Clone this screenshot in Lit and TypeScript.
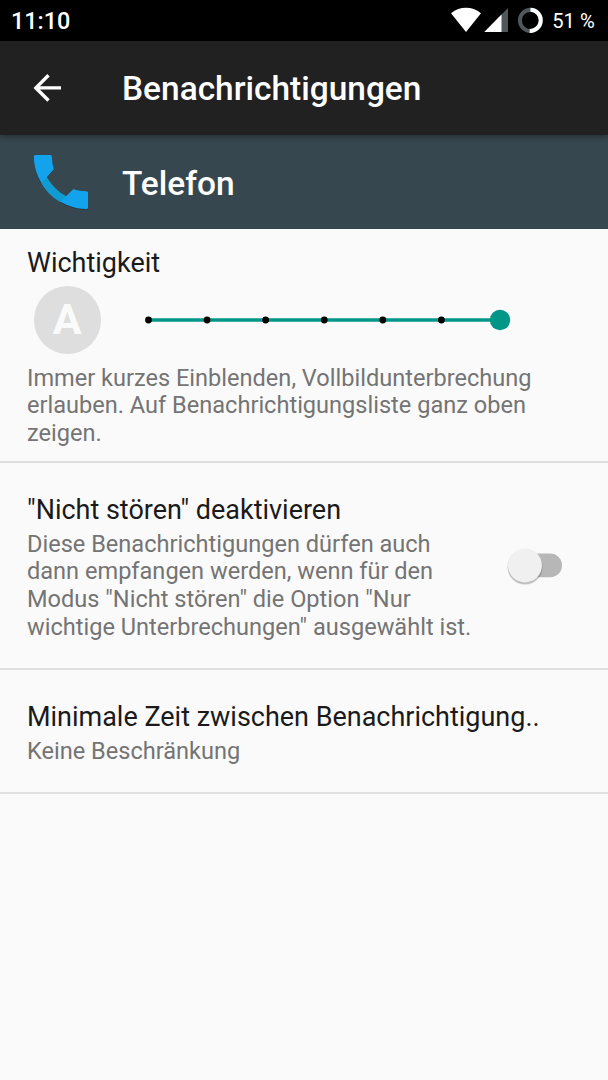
import { LitElement, html, svg, css } from "lit";
import { customElement, property } from "lit/decorators.js";

@customElement("status-bar")
class StatusBar extends LitElement {
  static styles = css`
    :host { display: flex; height: 40.5px; box-sizing: border-box; background: #000; color: #fff; padding: 0 13.3px 0 11px; }
    .clock { font-size: 23.4px; font-weight: 500; line-height: 42px; flex: 1; }
    .icons { display: block; flex: none; margin-right: 7.2px; }
    .battery { font-size: 20.2px; line-height: 42px; white-space: nowrap; }
  `;
  render() {
    return html`
      <span class="clock">11:10</span>
      <svg class="icons" width="95" height="40" viewBox="450 0 95 40">
        <path fill="#fff" d="M451 13.2C460 6 472 6 481 13.2L466 32Z" />
        <path fill="#50575a" d="M484.3 32L508 8V32Z" />
        <path fill="#fff" d="M484.3 32L501.5 14.6V32Z" />
        <circle cx="530.5" cy="20.3" r="10.6" fill="none" stroke="#50575a" stroke-width="4" />
        <path fill="none" stroke="#fff" stroke-width="4" d="M530.5 9.7A10.6 10.6 0 0 1 529.7 30.9" />
      </svg>
      <span class="battery">51 %</span>
    `;
  }
}

@customElement("importance-slider")
class ImportanceSlider extends LitElement {
  @property({ type: Number }) steps = 7;
  static styles = css`
    :host { display: block; height: 24px; width: 366px; }
    svg { display: block; }
  `;
  render() {
    const gap = 351.5 / (this.steps - 1);
    const ticks = Array.from({ length: this.steps - 1 }, (_, i) => 3.5 + i * gap);
    return html`
      <svg width="366" height="24" viewBox="0 0 366 24">
        <path d="M3.5 12H355" stroke="#009688" stroke-width="3.4" />
        ${ticks.map((x) => svg`<circle cx=${x} cy="12" r="3.4" fill="#000" />`)}
        <circle cx="355" cy="12" r="10.2" fill="#009688" />
      </svg>
    `;
  }
}

@customElement("app-root")
class AppRoot extends LitElement {
  static styles = css`
    :host { display: flex; flex-direction: column; width: 608px; height: 1080px; overflow: hidden; background: #fafafa; font-family: Roboto, sans-serif; color: #1a1a1a; }
    .toolbar, .app { display: flex; align-items: center; height: 94.5px; flex: none; color: #fff; font-size: 33.45px; font-weight: 500; line-height: 40px; }
    .toolbar span, .app span { padding-top: 3px; }
    .toolbar { background: #212121; box-shadow: 0 1px 6px rgba(0, 0, 0, 0.45); z-index: 1; }
    .app { background: #37474f; height: 94px; }
    .lead { display: block; flex: none; width: 122px; height: 94px; }
    section { flex: none; box-sizing: border-box; border-bottom: 2px solid #dfdfdf; padding: 0 27px; }
    .importance { height: 234px; padding-top: 17.5px; }
    .dnd { height: 207px; padding-top: 30.5px; }
    .interval { height: 124px; padding-top: 31px; }
    h2 { margin: 0; font-size: 26.97px; font-weight: 400; line-height: 32px; white-space: nowrap; }
    p { margin: 0; font-size: 23.57px; line-height: 27.7px; color: #747474; white-space: nowrap; }
    .level { display: flex; align-items: center; height: 68px; margin: 7.5px 0 10.5px 6.5px; }
    .auto { display: grid; place-items: center; width: 67.5px; height: 67.5px; border-radius: 50%; background: #dedede; color: #fafafa; font-size: 43px; font-weight: 700; line-height: 66px; align-content: start; margin-right: 44px; }
    .row { display: flex; }
    .grow { flex: 1; }
    .gap { margin-top: 5px; }
    .switch { display: block; flex: none; width: 62px; height: 48px; margin: 16.5px 15px 0 0; }
  `;
  render() {
    return html`
      <status-bar></status-bar>
      <header class="toolbar">
        <svg class="lead" viewBox="0 41 122 94">
          <path d="M61 87.9H36M48.5 75.3L35.9 87.9L48.5 100.5" fill="none" stroke="#fff" stroke-width="3.4" />
        </svg>
        <span>Benachrichtigungen</span>
      </header>
      <div class="app">
        <svg class="lead" viewBox="0 135 122 94">
          <g transform="translate(0 .8)" fill="#26343b">
            <path d="M35.4 155H50.3Q51.8 155 51.8 156.5Q52 163 53.8 169.3L46.8 177.2C51.5 185.5 58 191.8 66 196.3L73.2 189.2Q79.5 191.3 86.5 191.3Q88 191.3 88 192.8V207.5Q88 209 86.5 209C58.5 209 33.8 184.5 33.8 156.5Q33.8 155 35.4 155Z" />
          </g>
          <path fill="#12a3ec" d="M35.4 155H50.3Q51.8 155 51.8 156.5Q52 163 53.8 169.3L46.8 177.2C51.5 185.5 58 191.8 66 196.3L73.2 189.2Q79.5 191.3 86.5 191.3Q88 191.3 88 192.8V207.5Q88 209 86.5 209C58.5 209 33.8 184.5 33.8 156.5Q33.8 155 35.4 155Z" />
          <path fill="#109bd1" d="M46.8 177.2C51.5 185.5 58 191.8 66 196.3L60.2 202C52 197.5 45.7 191 41.2 182.8Z" />
        </svg>
        <span>Telefon</span>
      </div>
      <section class="importance">
        <h2>Wichtigkeit</h2>
        <div class="level">
          <span class="auto">A</span>
          <importance-slider></importance-slider>
        </div>
        <p>Immer kurzes Einblenden, Vollbildunterbrechung<br />erlauben. Auf Benachrichtigungsliste ganz oben<br />zeigen.</p>
      </section>
      <section class="dnd">
        <h2>"Nicht stören" deaktivieren</h2>
        <div class="row">
          <p class="grow gap">Diese Benachrichtigungen dürfen auch<br />dann empfangen werden, wenn für den<br />Modus "Nicht stören" die Option "Nur<br />wichtige Unterbrechungen" ausgewählt ist.</p>
          <svg class="switch" viewBox="504 542 62 48">
            <rect x="513" y="553.6" width="49" height="23.6" rx="11.8" fill="#b7b7b7" />
            <circle cx="525" cy="567.2" r="17.6" fill="#000" opacity=".12" />
            <circle cx="525" cy="566.8" r="17.2" fill="#000" opacity=".14" />
            <circle cx="525" cy="565.4" r="17" fill="#f0f0f0" />
          </svg>
        </div>
      </section>
      <section class="interval">
        <h2>Minimale Zeit zwischen Benachrichtigung..</h2>
        <p class="gap">Keine Beschränkung</p>
      </section>
    `;
  }
}
